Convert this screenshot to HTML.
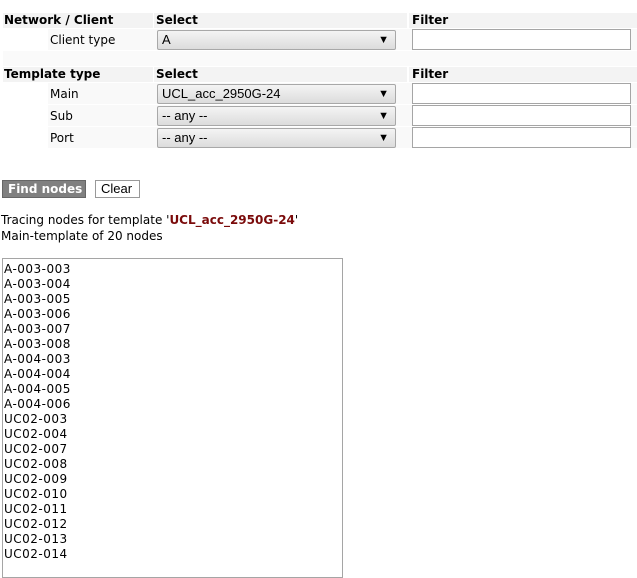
<!DOCTYPE html>
<html><head><style>
*{margin:0;padding:0;box-sizing:border-box}
body{width:637px;height:572px;overflow:hidden;background:#fff;font-family:"DejaVu Sans",Verdana,sans-serif;font-size:12px;color:#000;position:relative}
.a{position:absolute}
.hd{background:#f3f3f3;font-weight:bold;height:15px;line-height:15px}
.rw{background:#f9f9f9;height:21px;line-height:22px}
.sel{position:absolute;left:157px;width:239px;height:20px;border:1px solid #a8a8a8;border-radius:2px;background:linear-gradient(#f4f4f4,#dcdcdc);line-height:18px;padding-left:4px;font-family:"Liberation Sans",Arial,sans-serif;font-size:13px}
.sel:after{content:"▼";position:absolute;right:6px;top:0;font-size:11px}
.inp{position:absolute;left:412px;width:219px;height:21px;border:1px solid #a5a5a5;background:#fff}
.list div{height:15px;line-height:15px;letter-spacing:0.5px}
</style></head><body>
<div class="a hd" style="left:3px;top:13px;width:150px;padding-left:1px">Network / Client</div>
<div class="a hd" style="left:154px;top:13px;width:253px;padding-left:2px">Select</div>
<div class="a hd" style="left:409px;top:13px;width:228px;padding-left:3px">Filter</div>
<div class="a rw" style="left:48px;top:29px;width:589px;padding-left:2px">Client type</div>
<div class="sel" style="top:30px">A</div><div class="inp" style="top:29px"></div>
<div class="a" style="left:3px;top:51px;width:634px;height:15px;background:#fafafa"></div>
<div class="a hd" style="left:3px;top:67px;width:150px;padding-left:1px">Template type</div>
<div class="a hd" style="left:154px;top:67px;width:253px;padding-left:2px">Select</div>
<div class="a hd" style="left:409px;top:67px;width:228px;padding-left:3px">Filter</div>
<div class="a rw" style="left:48px;top:83px;width:589px;padding-left:2px">Main</div>
<div class="sel" style="top:84px">UCL_acc_2950G-24</div><div class="inp" style="top:83px"></div>
<div class="a rw" style="left:48px;top:105px;width:589px;padding-left:2px">Sub</div>
<div class="sel" style="top:106px">-- any --</div><div class="inp" style="top:105px"></div>
<div class="a rw" style="left:48px;top:127px;width:589px;padding-left:2px">Port</div>
<div class="sel" style="top:128px">-- any --</div><div class="inp" style="top:127px"></div>
<div class="a" style="left:2px;top:180px;width:84px;height:18px;background:#808080;border:1px solid #666;color:#fff;font-weight:bold;line-height:16px;padding-left:5px">Find nodes</div>
<div class="a" style="left:95px;top:180px;width:45px;height:18px;background:#fff;border:1px solid #999;line-height:16px;padding-left:5px;font-family:'Liberation Sans',Arial,sans-serif;font-size:13px">Clear</div>
<div class="a" style="left:1px;top:212px;line-height:16px">Tracing nodes for template '<b style="color:#7a0a0a">UCL_acc_2950G-24</b>'<br>Main-template of 20 nodes</div>
<div class="a list" style="left:2px;top:258px;width:341px;height:320px;border:1px solid #a5a5a5;padding:3px 0 0 1px">
<div>A-003-003</div><div>A-003-004</div><div>A-003-005</div><div>A-003-006</div><div>A-003-007</div><div>A-003-008</div><div>A-004-003</div><div>A-004-004</div><div>A-004-005</div><div>A-004-006</div><div>UC02-003</div><div>UC02-004</div><div>UC02-007</div><div>UC02-008</div><div>UC02-009</div><div>UC02-010</div><div>UC02-011</div><div>UC02-012</div><div>UC02-013</div><div>UC02-014</div>
</div>
</body></html>
